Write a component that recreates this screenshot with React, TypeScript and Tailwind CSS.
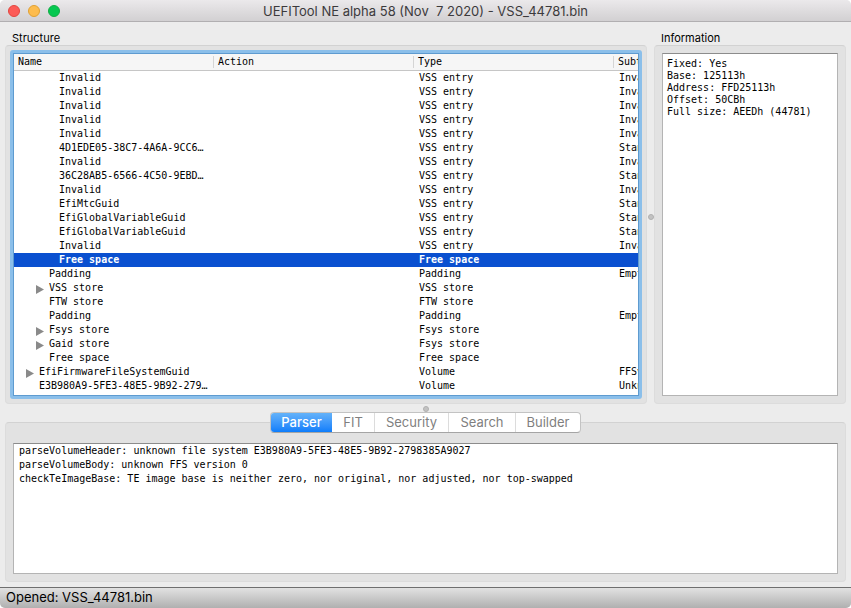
import { useState } from 'react';
import clsx from 'clsx';

type Row = {
  name: string;
  type: string;
  subtype?: string;
  level: 1 | 2 | 3;
  expandable?: boolean;
};

const rows: Row[] = [
  { name: 'Invalid', type: 'VSS entry', subtype: 'Invalid', level: 3 },
  { name: 'Invalid', type: 'VSS entry', subtype: 'Invalid', level: 3 },
  { name: 'Invalid', type: 'VSS entry', subtype: 'Invalid', level: 3 },
  { name: 'Invalid', type: 'VSS entry', subtype: 'Invalid', level: 3 },
  { name: 'Invalid', type: 'VSS entry', subtype: 'Invalid', level: 3 },
  { name: '4D1EDE05-38C7-4A6A-9CC6…', type: 'VSS entry', subtype: 'Standard', level: 3 },
  { name: 'Invalid', type: 'VSS entry', subtype: 'Invalid', level: 3 },
  { name: '36C28AB5-6566-4C50-9EBD…', type: 'VSS entry', subtype: 'Standard', level: 3 },
  { name: 'Invalid', type: 'VSS entry', subtype: 'Invalid', level: 3 },
  { name: 'EfiMtcGuid', type: 'VSS entry', subtype: 'Standard', level: 3 },
  { name: 'EfiGlobalVariableGuid', type: 'VSS entry', subtype: 'Standard', level: 3 },
  { name: 'EfiGlobalVariableGuid', type: 'VSS entry', subtype: 'Standard', level: 3 },
  { name: 'Invalid', type: 'VSS entry', subtype: 'Invalid', level: 3 },
  { name: 'Free space', type: 'Free space', level: 3 },
  { name: 'Padding', type: 'Padding', subtype: 'Empty', level: 2 },
  { name: 'VSS store', type: 'VSS store', level: 2, expandable: true },
  { name: 'FTW store', type: 'FTW store', level: 2 },
  { name: 'Padding', type: 'Padding', subtype: 'Empty', level: 2 },
  { name: 'Fsys store', type: 'Fsys store', level: 2, expandable: true },
  { name: 'Gaid store', type: 'Fsys store', level: 2, expandable: true },
  { name: 'Free space', type: 'Free space', level: 2 },
  { name: 'EfiFirmwareFileSystemGuid', type: 'Volume', subtype: 'FFSv2', level: 1, expandable: true },
  { name: 'E3B980A9-5FE3-48E5-9B92-279…', type: 'Volume', subtype: 'Unknown', level: 1 },
];

const indents = {
  1: 'pl-[12px]',
  2: 'pl-[22px]',
  3: 'pl-[32px]',
};

const columns = ['Name', 'Action', 'Type', 'Subtype'];

const tabs = [
  { name: 'Parser', width: 'w-[61px]' },
  { name: 'FIT', width: 'w-[43px]' },
  { name: 'Security', width: 'w-[74px]' },
  { name: 'Search', width: 'w-[67px]' },
  { name: 'Builder', width: 'w-[64px]' },
];

const information = `Fixed: Yes
Base: 125113h
Address: FFD25113h
Offset: 50CBh
Full size: AEEDh (44781)`;

const messages = `parseVolumeHeader: unknown file system E3B980A9-5FE3-48E5-9B92-2798385A9027
parseVolumeBody: unknown FFS version 0
checkTeImageBase: TE image base is neither zero, nor original, nor adjusted, nor top-swapped`;

const mono = "font-['DejaVu_Sans_Mono',monospace] text-[10px]";
const panel = 'rounded-[4px] border border-[#dcdcdc] border-t-[#d2d2d2] bg-[#e2e2e2]';
const textBox =
  'block w-full resize-none overflow-hidden border border-[#b4b4b4] border-t-[#8c8c8c] bg-white text-black outline-none';

function TitleBar() {
  return (
    <header className="grid h-[22px] shrink-0 grid-cols-[1fr_auto_1fr] items-center border-b border-[#b1afb1] bg-linear-to-b from-[#ebe9eb] to-[#d2d0d2] px-2">
      <div className="flex gap-2">
        <button aria-label="Close" className="size-3 rounded-full border border-[#e2463f] bg-[#fc5b57]" />
        <button aria-label="Minimize" className="size-3 rounded-full border border-[#e0a033] bg-[#fdbc4e]" />
        <button aria-label="Zoom" className="size-3 rounded-full border border-[#12ac45] bg-[#05c850]" />
      </div>
      <h1 className="whitespace-pre text-[13px] leading-5 text-[#3c3a3c]">
        {'UEFITool NE alpha 58 (Nov  7 2020) - VSS_44781.bin'}
      </h1>
      <div />
    </header>
  );
}

function Tree() {
  const [selected, setSelected] = useState(13);

  return (
    <div className="min-h-0 flex-1 rounded-[3px] bg-[#8bbfea] p-[3px]">
      <div className={clsx(mono, 'h-full overflow-hidden border border-[#5e9bd0] bg-white')}>
        <table className="w-[800px] table-fixed border-separate border-spacing-0 text-left leading-[14px] text-black">
          <thead>
            <tr>
              {columns.map((column) => (
                <th key={column} className="h-[17px] border-b border-[#c6c6c6] bg-[#f6f6f6] p-0 font-normal">
                  <div className="h-3 border-r border-[#d5d5d5] pl-1 leading-3">{column}</div>
                </th>
              ))}
            </tr>
          </thead>
          <tbody>
            {rows.map((row, index) => (
              <tr
                key={index}
                onClick={() => setSelected(index)}
                className={clsx('h-[14px]', selected === index && 'bg-[#0a50d0] font-bold text-white')}
              >
                <td className="p-0">
                  <div className={clsx('flex h-[14px] items-center whitespace-nowrap', indents[row.level])}>
                    <span className="flex w-[13px] shrink-0">
                      {row.expandable && (
                        <button aria-label={`Expand ${row.name}`} className="pt-[2px]">
                          <svg width="8" height="9" viewBox="0 0 8 9" fill="#8a8a8a">
                            <path d="M0 0 L8 4.5 L0 9 Z" />
                          </svg>
                        </button>
                      )}
                    </span>
                    {row.name}
                  </div>
                </td>
                <td className="p-0" />
                <td className="p-0 pl-[5px]">{row.type}</td>
                <td className="p-0 pl-[5px]">{row.subtype}</td>
              </tr>
            ))}
          </tbody>
        </table>
      </div>
    </div>
  );
}

function MessagePane() {
  const [active, setActive] = useState('Parser');

  return (
    <section className={clsx(panel, 'mt-[10px] flex h-40 shrink-0 flex-col px-[7px] pb-[7px]')}>
      <div role="tablist" className="-mt-[11px] flex h-[21px] shrink-0 justify-center">
        <div className="flex overflow-hidden rounded-[4px] border border-[#c3c3c3] border-b-[#a5a5a5] bg-white">
          {tabs.map((tab) => (
            <button
              key={tab.name}
              role="tab"
              aria-selected={active === tab.name}
              onClick={() => setActive(tab.name)}
              className={clsx(
                tab.width,
                'border-r border-[#dcdcdc] text-[13px] leading-[19px] last:border-r-0',
                active === tab.name
                  ? 'border-r-0 bg-linear-to-b from-[#63b2f9] to-[#0a7dfb] font-medium text-white'
                  : 'text-[#7f7f7f]',
              )}
            >
              {tab.name}
            </button>
          ))}
        </div>
      </div>
      <textarea
        readOnly
        aria-label="Messages"
        value={active === 'Parser' ? messages : ''}
        className={clsx(mono, textBox, 'mt-[10px] min-h-0 flex-1 px-[5px] leading-[14px]')}
      />
    </section>
  );
}

export default function App() {
  return (
    <div className="h-screen bg-white">
      <div className="flex h-full flex-col overflow-hidden rounded-[5px] bg-[#ececec] font-[Inter,sans-serif]">
        <TitleBar />
        <main className="flex min-h-0 flex-1 flex-col px-[5px] pt-2 pb-[5px]">
          <div className="flex min-h-0 flex-1">
            <section className="flex min-w-0 flex-1 flex-col">
              <h2 className="h-[15px] pl-[7px] text-[11px] leading-4 text-black">Structure</h2>
              <div className={clsx(panel, 'flex min-h-0 flex-1 flex-col p-1')}>
                <Tree />
              </div>
            </section>
            <div className="flex w-[7px] shrink-0 items-center justify-center">
              <span className="size-[6px] shrink-0 rounded-full border border-[#b0b0b0] bg-[#c2c2c2]" />
            </div>
            <section className="flex w-48 shrink-0 flex-col">
              <label htmlFor="information" className="h-[15px] pl-[7px] text-[11px] leading-4 text-black">
                Information
              </label>
              <div className={clsx(panel, 'flex min-h-0 flex-1 flex-col p-[7px]')}>
                <textarea
                  id="information"
                  readOnly
                  value={information}
                  className={clsx(mono, textBox, 'min-h-0 flex-1 px-1 py-1 leading-3')}
                />
              </div>
            </section>
          </div>
          <div className="flex h-2 shrink-0 items-end justify-center">
            <span className="size-[6px] rounded-full border border-[#b0b0b0] bg-[#c2c2c2]" />
          </div>
          <MessagePane />
        </main>
        <footer className="h-[21px] shrink-0 border-t border-[#6f6f6f] bg-linear-to-b from-[#e2e2e2] to-[#b0b0b0] px-[6px] text-[13px] leading-[19px] text-black">
          Opened: VSS_44781.bin
        </footer>
      </div>
    </div>
  );
}
